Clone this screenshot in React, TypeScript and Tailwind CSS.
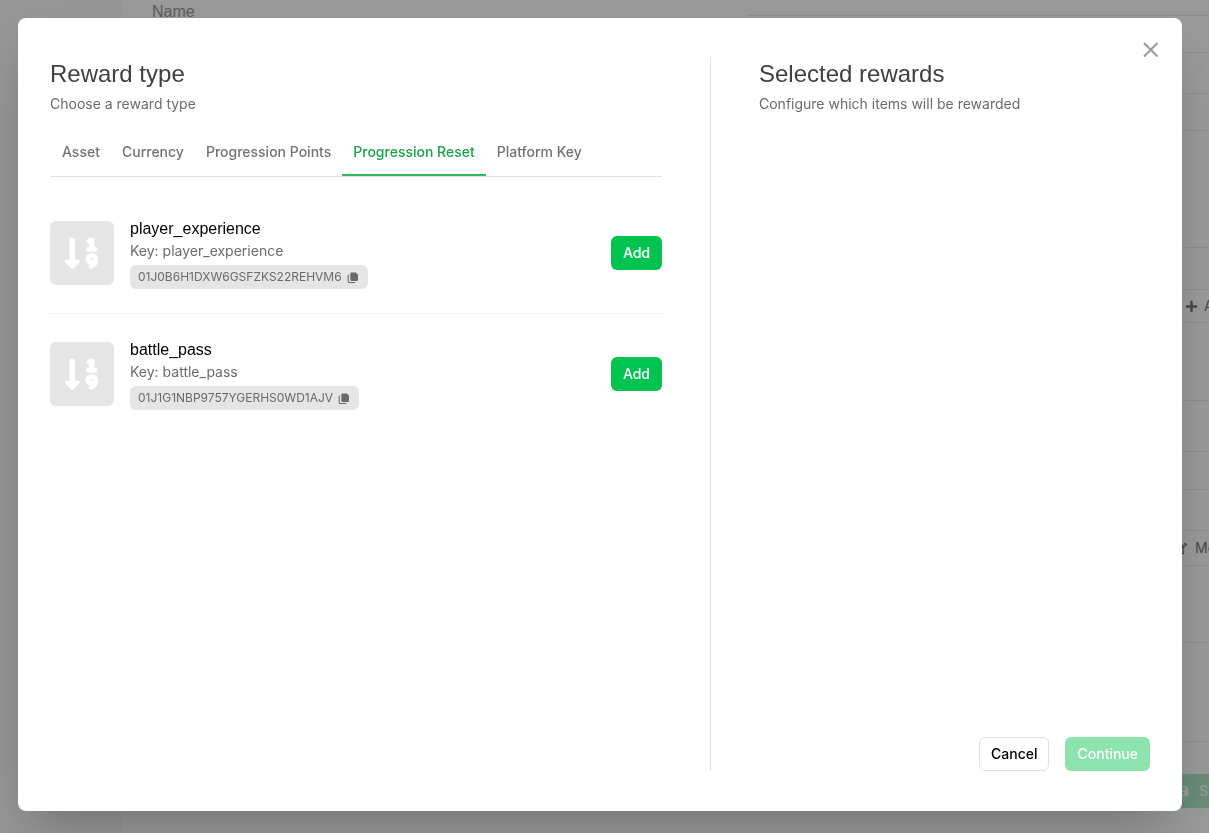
import React, { useState } from 'react';
import { FaEdit, FaPlus, FaSave, FaSortNumericDown } from 'react-icons/fa';

const tabs = ['Asset', 'Currency', 'Progression Points', 'Progression Reset', 'Platform Key'];

const rewards = [
  { key: 'player_experience', id: '01J0B6H1DXW6GSFZKS22REHVM6' },
  { key: 'battle_pass', id: '01J1G1NBP9757YGERHS0WD1AJV' }
];

function CopyIcon() {
  return (
    <svg viewBox="0 0 12 12" className="size-3" fill="none" aria-hidden="true">
      <path
        d="M4.6 1.6h4.2L11 3.8v5a1.3 1.3 0 0 1-1.3 1.3H4.6a1.3 1.3 0 0 1-1.3-1.3V2.9a1.3 1.3 0 0 1 1.3-1.3z"
        fill="currentColor"
      />
      <path
        d="M1.2 4v6.4c0 .6.5 1.1 1.1 1.1h5.5"
        stroke="currentColor"
        strokeWidth="1.1"
        strokeLinecap="round"
      />
    </svg>
  );
}

function RewardRow({ reward }: { reward: (typeof rewards)[number] }) {
  return (
    <li className="flex items-center gap-4 py-6 border-b border-[#f3f3f3] last:border-b-0">
      <div className="flex size-16 shrink-0 items-center justify-center rounded-md bg-[#e5e5e5] text-white">
        <FaSortNumericDown
          className="h-[35px] w-[34px]"
          preserveAspectRatio="none"
          strokeWidth="10"
          strokeLinejoin="round"
        />
      </div>
      <div className="flex-1 min-w-0">
        <h3 className="font-['Liberation_Sans',sans-serif] text-base leading-6 text-black">
          {reward.key}
        </h3>
        <p className="text-sm leading-5 text-[#6b6b6b]">Key: {reward.key}</p>
        <button
          type="button"
          aria-label={`Copy ${reward.id}`}
          className="mt-1 flex h-6 items-center gap-[5px] rounded-md bg-[#e5e5e5] pr-[9px] pl-2 text-xs text-[#6b6b6b]"
        >
          {reward.id}
          <CopyIcon />
        </button>
      </div>
      <button
        type="button"
        className="h-[34px] rounded-md bg-[#00c350] px-3 text-sm font-medium text-white"
      >
        Add
      </button>
    </li>
  );
}

function RewardDialog() {
  const [activeTab, setActiveTab] = useState('Progression Reset');

  return (
    <div
      role="dialog"
      aria-modal="true"
      className="relative flex flex-1 rounded-lg bg-white px-8 py-10 shadow-2xl"
    >
      <button type="button" aria-label="Close" className="absolute top-5 right-5 p-1 text-[#999]">
        <svg viewBox="0 0 16 16" className="size-4" fill="none" stroke="currentColor" strokeWidth="2">
          <path d="M2 1l13.5 13.5M15.5 1L2 14.5" />
        </svg>
      </button>

      {/* Reward type */}
      <section className="w-3/5 pr-12">
        <h2 className="font-['Liberation_Sans',sans-serif] text-2xl leading-8 text-[#404040]">
          Reward type
        </h2>
        <p className="mt-1 text-sm leading-5 text-[#6b6b6b]">Choose a reward type</p>

        <div role="tablist" className="mt-4 flex border-b border-[#e0e0e0] pl-px">
          {tabs.map((tab) => (
            <button
              key={tab}
              type="button"
              role="tab"
              aria-selected={tab === activeTab}
              onClick={() => setActiveTab(tab)}
              className={`border-b-2 px-[11px] py-3 text-sm leading-5 font-medium whitespace-nowrap ${
                tab === activeTab
                  ? 'border-[#2dba5f] text-[#1aa34a]'
                  : 'border-transparent text-[#737373]'
              }`}
            >
              {tab}
            </button>
          ))}
        </div>

        <ul className="mt-4">
          {rewards.map((reward) => (
            <RewardRow key={reward.id} reward={reward} />
          ))}
        </ul>
      </section>

      {/* Selected rewards */}
      <section className="flex w-2/5 flex-col justify-between border-l border-[#e0e0e0] pl-12">
        <div>
          <h2 className="font-['Liberation_Sans',sans-serif] text-2xl leading-8 text-[#404040]">
            Selected rewards
          </h2>
          <p className="mt-1 text-sm leading-5 text-[#6b6b6b]">
            Configure which items will be rewarded
          </p>
        </div>
        <div className="flex justify-end gap-4">
          <button
            type="button"
            className="h-[34px] rounded-md border border-[#e0e0e0] bg-white px-[11px] text-sm font-medium text-black"
          >
            Cancel
          </button>
          <button
            type="button"
            disabled
            className="h-[34px] rounded-md bg-[#8ce3ae] px-3 text-sm font-medium text-white"
          >
            Continue
          </button>
        </div>
      </section>
    </div>
  );
}

function PageBehind() {
  return (
    <div aria-hidden="true" className="flex h-screen overflow-hidden bg-white">
      <div className="w-[122px] shrink-0 bg-[#fafafa]" />
      <div className="flex-1 pl-[30px] font-['Liberation_Sans',sans-serif] text-base leading-6 text-[#999]">
        Name
      </div>
      <div className="flex w-[461px] shrink-0 flex-col items-stretch text-sm text-[#777]">
        <div className="h-4 border-b border-[#ebebeb]" />
        <div className="h-[37px] border-b border-[#ebebeb]" />
        <div className="h-[41px] border-b border-[#ebebeb]" />
        <div className="h-[37px] border-b border-[#ebebeb]" />
        <div className="h-[117px] border-b border-[#ebebeb]" />
        <div className="h-[42px] border-b border-[#ebebeb]" />
        <div className="flex h-[33px] items-center justify-end gap-[6px] border-b border-[#ebebeb]">
          <FaPlus className="size-[13px]" />
          <span className="w-[5px]">A</span>
        </div>
        <div className="h-[78px] border-b border-[#ebebeb]" />
        <div className="h-[51px] border-b border-[#ebebeb]" />
        <div className="h-[38px] border-b border-[#ebebeb]" />
        <div className="h-[41px] border-b border-[#ebebeb]" />
        <div className="flex h-[35px] items-center justify-end gap-2 border-b border-[#ebebeb]">
          <FaEdit className="size-[13px]" />
          <span className="w-[14px]">Me</span>
        </div>
        <div className="h-[77px] border-b border-[#ebebeb]" />
        <div className="h-[99px] border-b border-[#ebebeb]" />
        <div className="mt-8 ml-auto flex h-[34px] w-[50px] items-center justify-end gap-[10px] bg-[#b1e9ca] font-medium text-white">
          <FaSave className="size-3" />
          <span className="w-[10px]">S</span>
        </div>
      </div>
    </div>
  );
}

export default function App() {
  return (
    <div className="font-['Inter',sans-serif]">
      <PageBehind />
      <div className="fixed inset-0 flex bg-black/40 pt-[18px] pr-[27px] pb-[22px] pl-[18px]">
        <RewardDialog />
      </div>
    </div>
  );
}
